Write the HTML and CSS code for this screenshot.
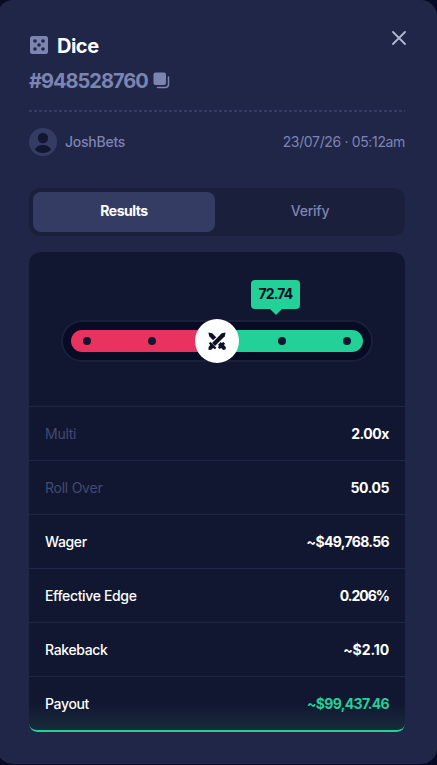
FILE: index.html
```html
<!DOCTYPE html>
<html lang="en">
<head>
  <meta charset="UTF-8" />
  <meta name="viewport" content="width=device-width, initial-scale=1" />
  <title>Dice</title>
  <link rel="stylesheet" href="styles.css">
</head>
<body>

  <div class="modal" role="dialog" aria-labelledby="game-title">
    <header>
      <div class="bet-heading">
        <div class="game">
          <svg class="dice-icon" width="18" height="18" viewBox="0 0 18 18">
            <rect width="18" height="18" rx="2.5" fill="#7d84b2" />
            <g fill="#202647">
              <circle cx="5" cy="5" r="1.8" />
              <circle cx="13" cy="5" r="1.8" />
              <circle cx="9" cy="9" r="1.8" />
              <circle cx="5" cy="13" r="1.8" />
              <circle cx="13" cy="13" r="1.8" />
            </g>
          </svg>
          <h1 id="game-title">Dice</h1>
        </div>
        <div class="bet-id">
          <span>#948528760</span>
          <svg class="copy-icon" width="17" height="17" viewBox="0 0 17 17">
            <rect x="0.5" y="0.5" width="12.5" height="12.5" rx="2" fill="#7d84b2" />
            <path d="M15.500 5v7.500a3 3 0 0 1-3 3H4.500" fill="none" stroke="#7d84b2" stroke-width="1.500" stroke-linecap="round" />
          </svg>
        </div>
      </div>
      <button class="modal-close" aria-label="Close">
        <svg width="14" height="14" viewBox="0 0 14 14">
          <path d="M1 1l12 12M13 1L1 13" stroke="#b1b6d3" stroke-width="1.8" stroke-linecap="round" />
        </svg>
      </button>
    </header>

    <div class="divider"></div>

    <div class="meta">
      <div class="user">
        <svg width="28" height="28" viewBox="0 0 28 28">
          <circle cx="14" cy="14" r="14" fill="#353c64" />
          <circle cx="14" cy="10" r="5.2" fill="#111730" />
          <path d="M5.800 21.500C7.600 18.300 10.400 17 14 17s6.400 1.300 8.200 4.500C20.200 23.900 17.300 25 14 25s-6.200-1.100-8.200-3.500z" fill="#111730" />
        </svg>
        <span class="username">JoshBets</span>
      </div>
      <span class="date">23/07/26 · 05:12am</span>
    </div>

    <div class="tabs">
      <button class="tab active">Results</button>
      <button class="tab verify">Verify</button>
    </div>

    <section class="panel">
      <div class="graph">
        <div class="slider">
          <div class="track">
            <div class="lose"><i class="dot"></i><i class="dot"></i></div>
            <div class="win"><i class="dot"></i><i class="dot"></i></div>
          </div>
          <div class="handle">
            <svg width="18" height="18" viewBox="0 0 18 18">
              <g fill="#0c1128">
                <path d="M.4.4l3.800.8L8.200 5.200 5.100 8.300 1.200 4.300z" />
                <path d="M17.600.4l-.8 3.900L7 14l-3-3L13.700 1.200z" />
                <path d="M10 12.800l2.800-2.800.9.9 1.700-1 1.600 1.600-1 1.700 1.900 1.900-.4 2.500-2.400.3-1.900-1.900-1.700 1.100-1.500-1.500.9-1.800z" />
                <path d="M.9 11.300l1.500-1.500 6 6-1.500 1.500-1.900-1.200-1.700 1.700-2.800.1.100-2.800L2.200 12.900z" />
              </g>
            </svg>
          </div>
          <div class="tooltip">72.74</div>
        </div>
      </div>
      <div class="row muted"><span>Multi</span><b>2.00x</b></div>
      <div class="row muted"><span>Roll Over</span><b>50.05</b></div>
      <div class="row"><span>Wager</span><b>~$49,768.56</b></div>
      <div class="row"><span>Effective Edge</span><b class="tight">0.206%</b></div>
      <div class="row"><span>Rakeback</span><b class="wide">~$2.10</b></div>
      <div class="row payout"><span>Payout</span><b>~$99,437.46</b></div>
    </section>
  </div>

</body>
</html>
```
FILE: styles.css
```css
* {
  box-sizing: border-box;
}
body {
  margin: 0;
  height: 765px;
  background: #070b24;
  font-family: Inter, "Liberation Sans", sans-serif;
  font-size: 14px;
  color: #fff;
  overflow: hidden;
}
button {
  font: inherit;
  border: none;
  padding: 0;
  background: transparent;
  cursor: pointer;
}
svg {
  display: block;
}

.modal {
  width: 440px;
  height: 764px;
  margin-left: -3px;
  padding: 32px;
  background: #202647;
  border-radius: 16px;
}

header {
  display: flex;
  justify-content: space-between;
  align-items: flex-start;
  height: 78px;
}
.game {
  display: flex;
  align-items: center;
  gap: 9px;
  height: 28px;
  padding-left: 1px;
}
.dice-icon {
  margin-top: -2px;
}
h1 {
  margin: 0;
  font-size: 20px;
  font-weight: 700;
  letter-spacing: -0.5px;
}
.bet-id {
  display: flex;
  align-items: center;
  gap: 5px;
  height: 28px;
  margin-top: 7px;
  font-size: 20px;
  font-weight: 700;
  letter-spacing: -1px;
  color: #7d84b2;
}
.copy-icon {
  margin-top: -1px;
}
.modal-close {
  margin: -1px -1px 0 0;
}

.divider {
  height: 2px;
  background: repeating-linear-gradient(90deg, #353c64 0 3px, transparent 3px 5px);
}

.meta {
  display: flex;
  justify-content: space-between;
  align-items: center;
  height: 28px;
  margin-top: 16px;
  color: #7d84b2;
}
.user {
  display: flex;
  align-items: center;
  gap: 8px;
  font-weight: 500;
}
.username {
  padding-bottom: 2px;
  letter-spacing: -0.25px;
}
.date {
  padding-bottom: 2px;
  letter-spacing: -0.35px;
}

.tabs {
  display: flex;
  height: 48px;
  margin-top: 32px;
  padding: 4px;
  background: #1a1f3c;
  border-radius: 12px;
}
.tab {
  width: 182px;
  padding-bottom: 3px;
  border-radius: 8px;
  font-weight: 500;
  letter-spacing: -0.25px;
  color: #7d84b2;
}
.tab.active {
  background: #353c64;
  font-weight: 700;
  letter-spacing: -0.5px;
  color: #fff;
}
.tab.verify {
  margin-left: 4px;
}

.panel {
  margin-top: 16px;
  background: #111730;
  border-radius: 12px 12px 8px 8px;
  overflow: hidden;
}
.graph {
  height: 154px;
  padding: 68px 32px 0;
}
.slider {
  position: relative;
  height: 42px;
  padding: 8px;
  border: 2px solid #1a1f3c;
  border-radius: 21px;
  background: #070b24;
}
.track {
  display: flex;
  height: 22px;
  border-radius: 11px;
  overflow: hidden;
}
.lose,
.win {
  flex: 1;
  display: flex;
  align-items: center;
  gap: 57px;
}
.lose {
  padding-left: 12px;
  background: #e9325f;
}
.win {
  justify-content: flex-end;
  padding-right: 12px;
  background: #22d197;
}
.dot {
  width: 8px;
  height: 8px;
  border-radius: 50%;
  background: #111730;
}
.handle {
  position: absolute;
  top: -3px;
  left: 132px;
  width: 44px;
  height: 44px;
  display: flex;
  align-items: center;
  justify-content: center;
  border-radius: 50%;
  background: #fff;
}
.tooltip {
  position: absolute;
  top: -42px;
  left: 188px;
  width: 49px;
  height: 29px;
  line-height: 28px;
  border-radius: 4px;
  background: #22d197;
  color: #070b24;
  font-weight: 700;
  letter-spacing: -0.8px;
  text-align: center;
}
.tooltip::after {
  content: "";
  position: absolute;
  top: 29px;
  left: 19px;
  border: 6px solid transparent;
  border-top-color: #22d197;
  border-bottom: none;
}

.row {
  display: flex;
  justify-content: space-between;
  align-items: center;
  height: 54px;
  padding: 0 16px 1px;
  border-top: 1px solid #202647;
}
.row span {
  font-weight: 500;
  letter-spacing: -0.35px;
}
.row b {
  font-weight: 700;
  letter-spacing: -0.65px;
}
.row b.tight {
  letter-spacing: -1px;
}
.row b.wide {
  letter-spacing: -0.1px;
}
.row.muted span {
  font-weight: 400;
  letter-spacing: -0.25px;
  color: #434a73;
}
.row.muted b {
  letter-spacing: -0.45px;
}
.row.payout {
  height: 56px;
  border-bottom: 2px solid #22d197;
  border-radius: 0 0 8px 8px;
  background: linear-gradient(#111730 50%, #182b3c);
}
.payout b {
  color: #22d197;
}
```
